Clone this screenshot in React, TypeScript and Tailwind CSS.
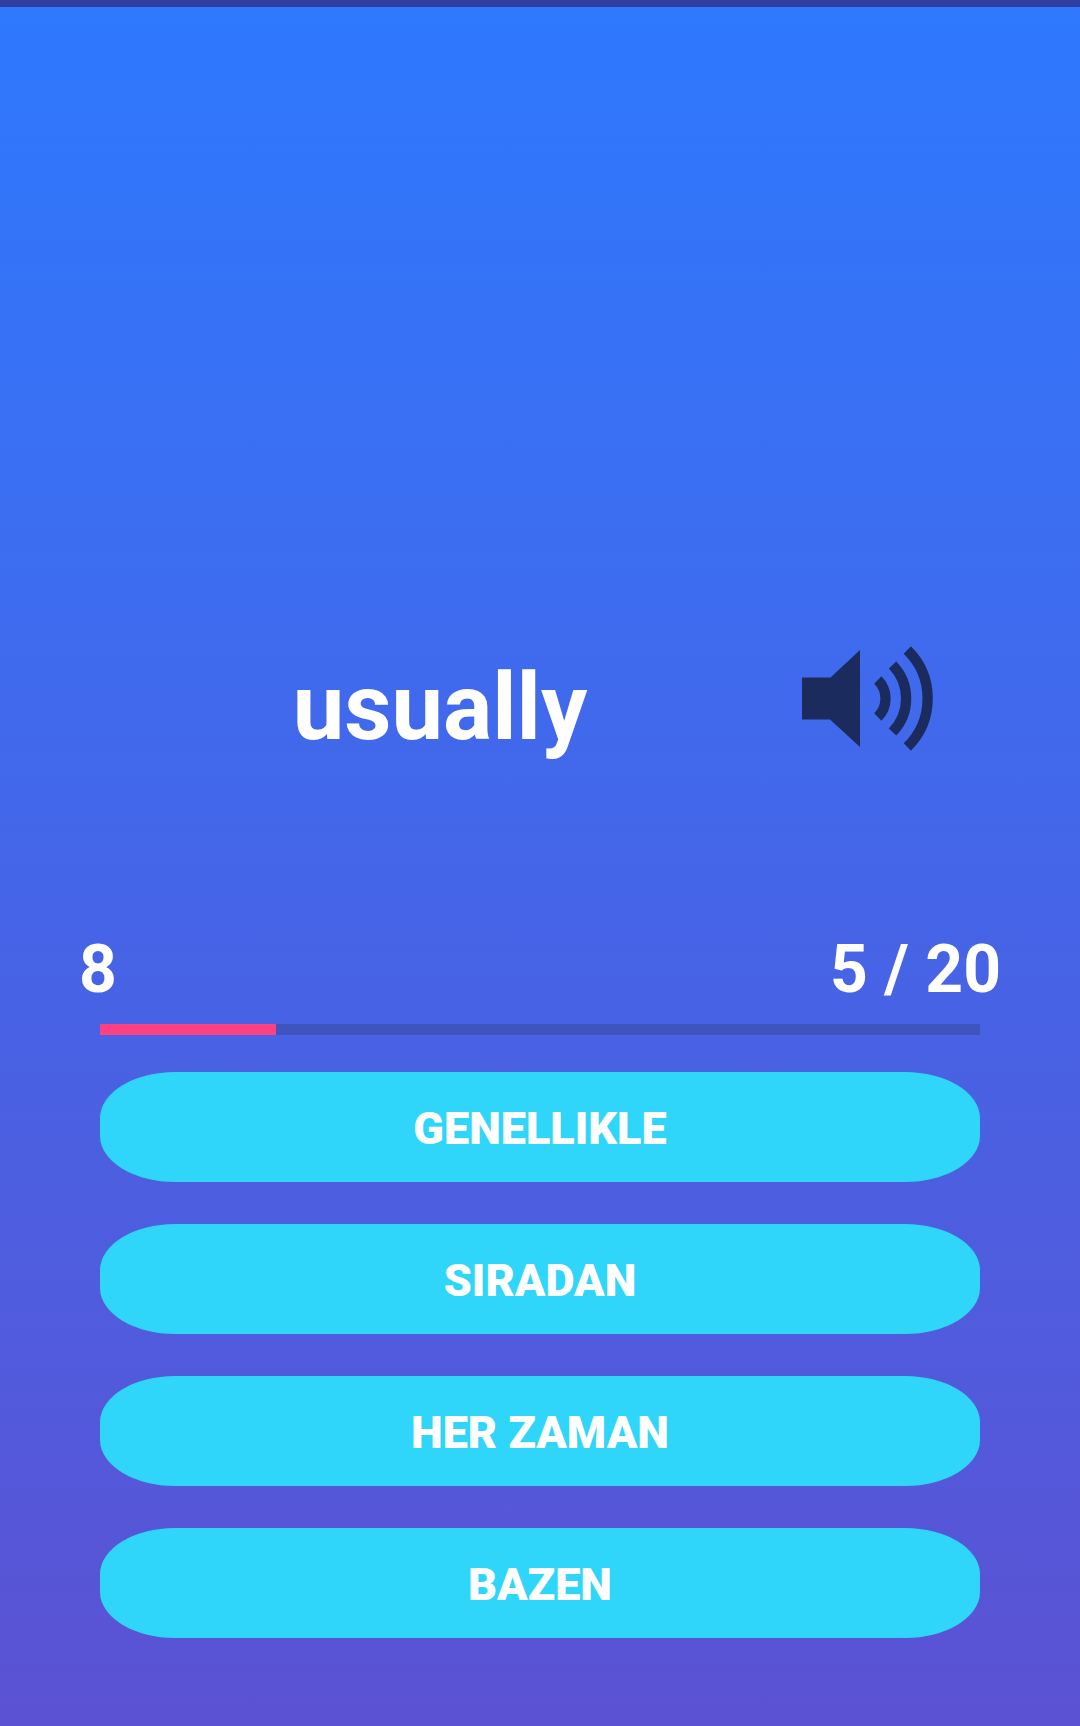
const answers = ["GENELLIKLE", "SIRADAN", "HER ZAMAN", "BAZEN"];

function SpeakerIcon() {
  return (
    <svg viewBox="0 0 134 108" className="h-[108px] w-[134px]" aria-hidden="true">
      <path d="M2 32.5H30.5L60 5V102L30 74.5H2Z" fill="#1b2b5e" />
      <g fill="none" stroke="#1b2b5e" strokeWidth="10.3">
        <path d="M77.8 35A26 26 0 0 1 77.8 72" />
        <path d="M92.5 20A48 48 0 0 1 92.5 87" />
        <path d="M107.3 5A68 68 0 0 1 107.3 102" />
      </g>
    </svg>
  );
}

function Quiz({ seconds, current, total }: { seconds: number; current: number; total: number }) {
  return (
    <main className="flex min-h-screen flex-col border-t-[7px] border-[#303f9f] bg-[linear-gradient(to_bottom,#2e79fe,#5b52d3)] pb-[88px] font-['Roboto',sans-serif] font-bold text-white">
      <section className="flex flex-1 items-end px-20 pb-[165px]">
        <div className="flex w-full items-center">
          <h1 className="flex-1 pt-[19px] text-center text-[92px] leading-[110px]">usually</h1>
          <button type="button" aria-label="Listen" className="mr-[66px]">
            <SpeakerIcon />
          </button>
        </div>
      </section>
      <div className="flex justify-between px-[79px] pt-[3px] text-[66px] leading-[78px]">
        <span>{seconds}</span>
        <span>
          {current} / {total}
        </span>
      </div>
      <div className="px-[100px]">
        <div
          role="progressbar"
          aria-label="Progress"
          aria-valuenow={20}
          aria-valuemin={0}
          aria-valuemax={100}
          className="mt-[15px] h-[11px] bg-[#3f51b5]/80"
        >
          <div className="h-full w-1/5 bg-[#ff4081]" />
        </div>
        <div className="mt-[37px] flex flex-col gap-[42px]">
          {answers.map((answer) => (
            <button
              key={answer}
              type="button"
              className="h-[110px] w-full rounded-[75px/46px] bg-[#30d5fa] pt-1 text-[45px] leading-[52px] font-black"
            >
              {answer}
            </button>
          ))}
        </div>
      </div>
    </main>
  );
}

export default function App() {
  return <Quiz seconds={8} current={5} total={20} />;
}
